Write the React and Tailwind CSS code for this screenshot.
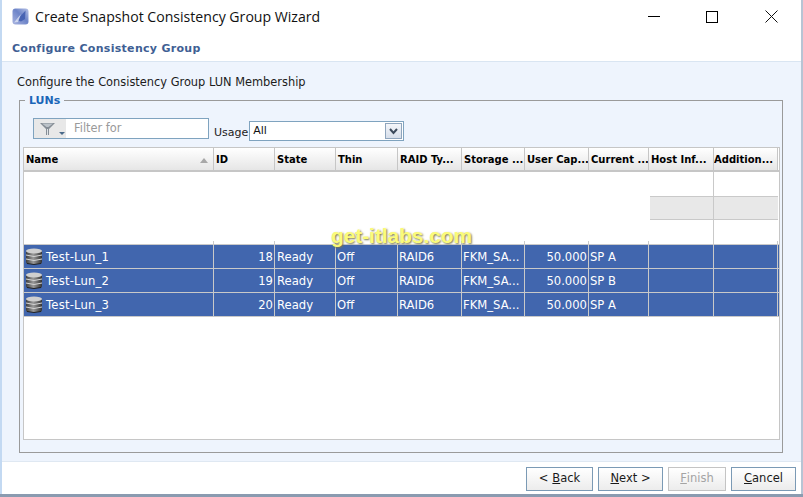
const columns = [
  { label: 'Name', width: 'w-[190px]' },
  { label: 'ID', width: 'w-[61px]' },
  { label: 'State', width: 'w-[61px]' },
  { label: 'Thin', width: 'w-[62px]' },
  { label: 'RAID Ty...', width: 'w-[64px]' },
  { label: 'Storage ...', width: 'w-[63px]' },
  { label: 'User Cap...', width: 'w-[64px]' },
  { label: 'Current ...', width: 'w-[60px]' },
  { label: 'Host Inf...', width: 'w-[65px]' },
  { label: 'Addition...', width: 'w-[64px]' },
];

const luns = [
  { name: 'Test-Lun_1', id: 18, sp: 'SP A' },
  { name: 'Test-Lun_2', id: 19, sp: 'SP B' },
  { name: 'Test-Lun_3', id: 20, sp: 'SP A' },
];

const AppIcon = () => (
  <svg width="17" height="17" viewBox="0 0 17 17">
    <defs>
      <linearGradient id="appGrad" x1="0" y1="1" x2="1" y2="0">
        <stop offset="0" stopColor="#a9b4e0" />
        <stop offset="0.55" stopColor="#6d84c8" />
        <stop offset="1" stopColor="#b6c2e6" />
      </linearGradient>
    </defs>
    <rect x="0.5" y="0.5" width="16" height="16" rx="3" fill="url(#appGrad)" />
    <path d="M5 12 L13.5 2.5 L13 11 L9 13.5 Z" fill="#3f5cae" opacity="0.85" />
    <path d="M2 14.5 L9 6 L6 14 Z" fill="#e4e9f7" opacity="0.75" />
  </svg>
);

const FunnelIcon = () => (
  <svg width="17" height="14" viewBox="0 0 17 14">
    <path d="M1 1 H16 L10 7 V13 H7 V7 Z" fill="#858d95" />
    <path d="M3 1.5 H14 L9.5 5 H7.5 Z" fill="#bcc3c9" />
    <path d="M8 7 H9 V13 H8 Z" fill="#dfe3e6" />
  </svg>
);

const DiskIcon = () => (
  <svg width="16" height="17" viewBox="0 0 16 17" className="shrink-0 -mt-[2px]">
    <defs>
      <linearGradient id="diskGrad" x1="0" y1="0" x2="1" y2="0">
        <stop offset="0" stopColor="#3d3d3d" />
        <stop offset="0.45" stopColor="#9a9a9a" />
        <stop offset="1" stopColor="#333" />
      </linearGradient>
    </defs>
    <rect x="0" y="2" width="16" height="14" rx="2" fill="url(#diskGrad)" />
    <ellipse cx="8" cy="3" rx="8" ry="2.5" fill="#cfcfcf" />
    <path d="M0 7 Q8 10 16 7" stroke="#d4d4d4" strokeWidth="1" fill="none" />
    <path d="M0 11 Q8 14 16 11" stroke="#d4d4d4" strokeWidth="1" fill="none" />
    <path d="M1 15.5 Q8 17.5 15 15.5" stroke="#222" strokeWidth="1" fill="none" />
  </svg>
);

const HeaderCell = ({ col, index }) => (
  <div
    className={`${col.width} shrink-0 h-full flex items-center ${index === 9 ? 'pl-0' : 'pl-[2px]'} border-r border-[#c6c6c6] whitespace-nowrap overflow-hidden bg-gradient-to-b from-white to-[#e6e6e6] font-bold text-[10px] text-[#000] relative`}
  >
    {col.label}
    {index === 0 && (
      <span className="absolute right-[5px] top-[10px] w-0 h-0 border-l-[4px] border-r-[4px] border-b-[5px] border-l-transparent border-r-transparent border-b-[#a8a8a8]" />
    )}
  </div>
);

const LunRow = ({ lun }) => {
  const cells = [
    <div className="flex items-center gap-[3px] pl-[2px]" key="n">
      <DiskIcon />
      <span className="ml-[1px] tracking-[0.2px]">{lun.name}</span>
    </div>,
    <div className="text-right pr-[1px]" key="i">{lun.id}</div>,
    <div className="pl-[2px]" key="s">Ready</div>,
    <div className="pl-[1px]" key="t">Off</div>,
    <div className="pl-[1px]" key="r">RAID6</div>,
    <div className="pl-[1px]" key="p">FKM_SA...</div>,
    <div className="text-right pr-[1px]" key="c">50.000</div>,
    <div className="pl-[1px]" key="o">{lun.sp}</div>,
    <div key="h" />,
    <div key="a" />,
  ];
  return (
    <div className="flex h-[24px] bg-[#4166ae] border-b border-[#c9c9c9] text-white text-[11.6px]">
      {columns.map((col, i) => (
        <div
          key={col.label}
          className={`${col.width} shrink-0 h-full pt-[2px] border-r border-[#c9c9c9] flex flex-col justify-center whitespace-nowrap overflow-hidden`}
        >
          {cells[i]}
        </div>
      ))}
    </div>
  );
};

const WizardButton = ({ children, disabled, className }) => (
  <button
    className={`h-[24px] text-[11.5px] flex items-center justify-center border bg-gradient-to-b from-white to-[#ececec] ${
      disabled ? 'border-[#c4c4c4] text-[#a4a4a4]' : 'border-[#7b9ab5] text-[#1a1a1a]'
    } ${className}`}
  >
    {children}
  </button>
);

export default function App() {
  return (
    <div className="w-[803px] h-[497px] overflow-hidden bg-white flex flex-col font-['DejaVu_Sans',sans-serif] text-[11px] text-[#111] relative">
      <div className="flex-1 min-h-0 flex flex-col border-l-2 border-l-[#c3d9f2] border-r-2 border-r-[#b7c4d4]">
        <div className="h-[33px] flex items-center pl-[10px] shrink-0">
          <AppIcon />
          <span className="ml-[6px] font-['Open_Sans',sans-serif] text-[14.1px] text-[#111]">
            Create Snapshot Consistency Group Wizard
          </span>
          <div className="ml-auto flex items-center text-black">
            <span className="block w-[12px] h-[1px] bg-black mr-[46px]" />
            <span className="block w-[12px] h-[12px] border border-black mr-[47px]" />
            <svg width="13" height="13" viewBox="0 0 13 13" className="mr-[23px]">
              <path d="M0.5 0.5 L12.5 12.5 M12.5 0.5 L0.5 12.5" stroke="#111" strokeWidth="1" fill="none" />
            </svg>
          </div>
        </div>

        <div className="h-[29px] shrink-0 pl-[10px] pt-[8px] font-bold tracking-[0.3px] text-[#3f5f94] border-b border-b-[#d9e5f2]">
          Configure Consistency Group
        </div>

        <div className="flex-1 min-h-0 bg-[#eef4fd] pl-[17px] border-b border-b-[#dfe8f2] flex flex-col">
          <div className="pt-[12px] h-[32px] shrink-0 -ml-[2px] text-[11.4px] text-[#1c1c1c]">Configure the Consistency Group LUN Membership</div>

          <fieldset className="border border-[#9a9a9a] h-[359px] w-[764px] px-[3px] min-w-0">
            <legend className="ml-[2px] px-[4px] font-bold text-[#1a66b8] leading-[13px]">LUNs</legend>

            <div className="h-[40px] flex pl-[10px] pt-[11px]">
              <div className="w-[176px] h-[21px] border border-[#7fa3bf] bg-white flex items-center">
                <div className="w-[32px] h-full bg-[#e8e8e8] flex items-center pl-[5px] relative shrink-0">
                  <FunnelIcon />
                  <span className="absolute left-[25px] bottom-[3px] w-0 h-0 border-l-[3px] border-r-[3px] border-t-[3px] border-l-transparent border-r-transparent border-t-[#4a6a8a]" />
                </div>
                <span className="ml-[8px] text-[11.4px] text-[#9a9a9a]">Filter for</span>
              </div>
              <span className="ml-[5px] mt-[7px] text-[#222]">Usage</span>
              <div className="ml-[1px] mt-[3px] w-[155px] h-[20px] border border-[#7fa3bf] bg-white flex items-center pl-[3px] relative">
                <span className="mt-[1px]">All</span>
                <div className="ml-auto mr-[1px] w-[17px] h-[16px] border border-[#8fa5bd] bg-gradient-to-b from-[#f4f6fa] to-[#d6deea] flex items-center justify-center">
                  <svg width="9" height="7" viewBox="0 0 9 7">
                    <path d="M1 1 L4.5 5 L8 1" stroke="#3c4a5c" strokeWidth="2" fill="none" />
                  </svg>
                </div>
              </div>
            </div>

            <div className="h-[293px] w-[757px] border border-[#c6c6c6] bg-white overflow-hidden">
              <div className="flex h-[22px] border-b-2 border-[#c6c6c6] box-content">
                {columns.map((col, i) => (
                  <HeaderCell key={col.label} col={col} index={i} />
                ))}
              </div>

              <div className="h-[72px] ml-[626px] w-[128px] flex flex-col">
                {[0, 1, 2].map((row) => (
                  <div
                    key={row}
                    className={`h-[24px] flex ${row === 1 ? 'bg-[#e8e8e8] border-y border-[#c9c9c9]' : ''}`}
                  >
                    <div className="w-[64px] border-r border-[#c9c9c9]" />
                    <div className="w-[64px]" />
                  </div>
                ))}
              </div>

              <div className="flex h-[3px] -mt-[3px]">
                {columns.map((col) => (
                  <div key={col.label} className={`${col.width} shrink-0 border-r border-[#c9c9c9]`} />
                ))}
              </div>

              <div className="border-t border-[#c9c9c9]">
                {luns.map((lun) => (
                  <LunRow key={lun.name} lun={lun} />
                ))}
              </div>
            </div>
          </fieldset>
        </div>

        <div className="h-[32px] shrink-0 flex justify-end items-start pt-[5px] pr-[5px] gap-[5px]">
          <WizardButton className="w-[67px]">
            &lt; <span className="underline ml-[4px]">B</span>ack
          </WizardButton>
          <WizardButton className="w-[65px]">
            <span className="underline">N</span>ext &gt;
          </WizardButton>
          <WizardButton disabled className="w-[58px]">
            <span className="underline">F</span>inish
          </WizardButton>
          <WizardButton className="w-[65px]">
            <span className="underline">C</span>ancel
          </WizardButton>
        </div>
      </div>
      <div className="h-[3px] shrink-0 bg-[#8a9bb0]" />

      <div className="absolute left-[331px] top-[220px] font-['Liberation_Sans',sans-serif] font-bold text-[20.8px] text-[#fbfb7a] [text-shadow:1px_1px_2px_#77774a] pointer-events-none">
        get-itlabs.com
      </div>
    </div>
  );
}
